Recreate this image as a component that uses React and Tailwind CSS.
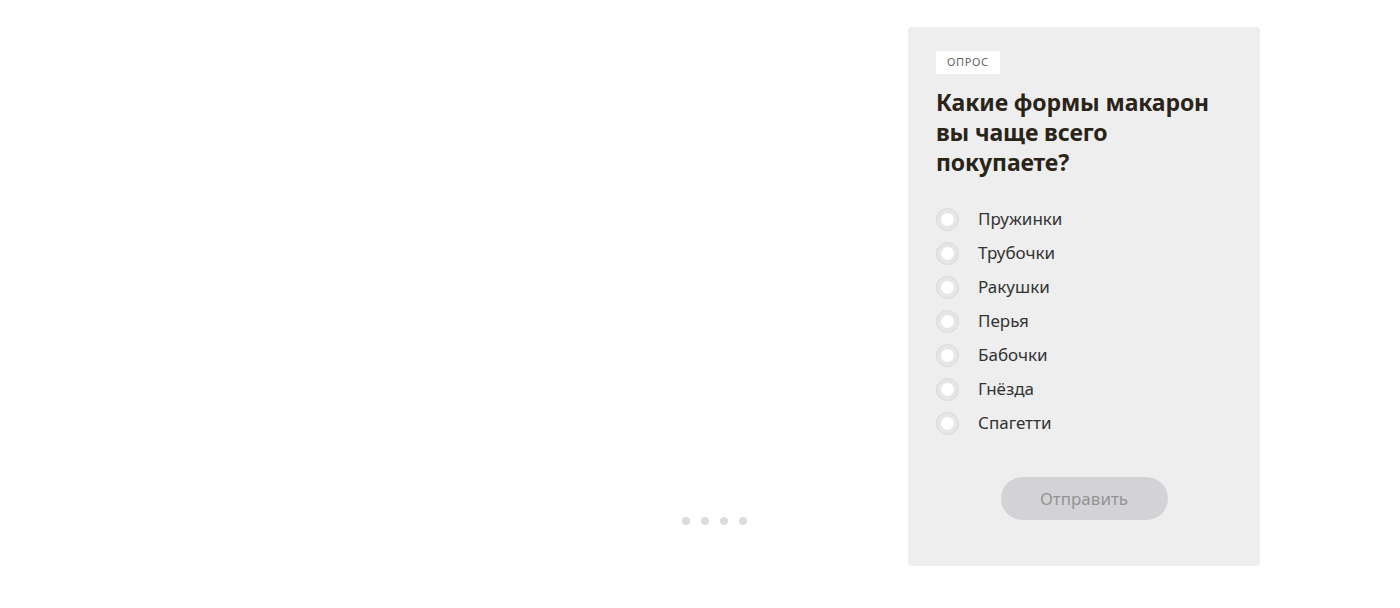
const options = ['Пружинки', 'Трубочки', 'Ракушки', 'Перья', 'Бабочки', 'Гнёзда', 'Спагетти'];

const App = () => {
    return (
        <div className="w-[1400px] h-[608px] bg-white flex pt-[27px] pr-[140px]" style={{ fontFamily: '"Noto Sans", "Open Sans", sans-serif' }}>
            {/* Slider area */}
            <div className="flex-1 flex flex-col justify-end items-end pr-[161px] pb-[83px]">
                <div className="flex items-center gap-[11px]">
                    {[0, 1, 2, 3].map((i) => (
                        <span key={i} className="w-2 h-2 rounded-full bg-[#dcdcdc]"></span>
                    ))}
                </div>
            </div>

            {/* Poll */}
            <div className="w-[352px] h-[539px] bg-[#eeeeee] rounded-[4px] px-[28px] pt-[24px] flex flex-col">
                <div className="self-start bg-white h-[23px] px-[11px] flex items-center text-[11px] tracking-[0.06em] text-[#666]">
                    ОПРОС
                </div>
                <h2 className="mt-[13px] text-[23px] leading-[30px] font-bold text-[#2a2418] tracking-[-0.005em]">
                    Какие формы макарон вы чаще всего покупаете?
                </h2>

                <div className="mt-[25px] flex flex-col">
                    {options.map((opt) => (
                        <label key={opt} className="flex items-center h-[34px] cursor-pointer">
                            <span className="w-[23px] h-[23px] rounded-full border border-[#d9d9de] bg-[#e6e6e8] flex items-center justify-center">
                                <span className="w-[13px] h-[13px] rounded-full bg-white"></span>
                            </span>
                            <span className="ml-[19px] text-[17px] text-[#333]">{opt}</span>
                        </label>
                    ))}
                </div>

                <div className="mt-[37px] flex justify-center">
                    <button disabled className="w-[167px] h-[43px] rounded-full bg-[#d3d3d7] text-[17px] text-[#939393]">
                        Отправить
                    </button>
                </div>
            </div>
        </div>
    );
};

export default App;
